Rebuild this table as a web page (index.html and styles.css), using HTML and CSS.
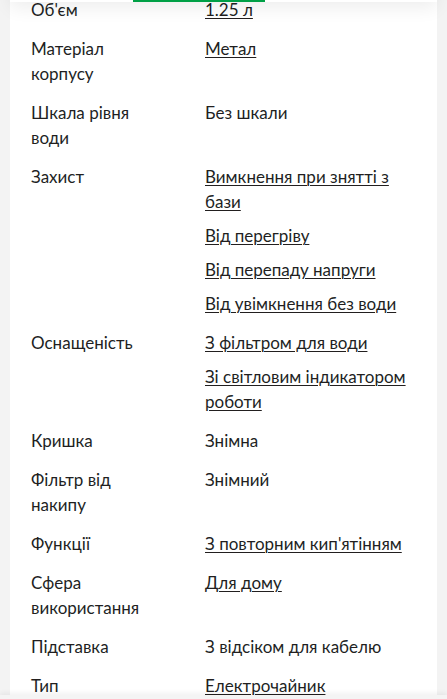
FILE: index.html
```html
<!DOCTYPE html>
<html lang="uk">
<head>
<meta charset="utf-8">
<link rel="stylesheet" href="styles.css">
</head>
<body>
<div class="tabs"><span class="tab-indicator"></span></div>
<main class="card">
  <dl class="specs">
    <div class="row"><dt>Об'єм</dt><dd><a href="#">1.25 л</a></dd></div>
    <div class="row"><dt>Матеріал корпусу</dt><dd><a href="#">Метал</a></dd></div>
    <div class="row"><dt>Шкала рівня води</dt><dd><span>Без шкали</span></dd></div>
    <div class="row"><dt>Захист</dt><dd>
      <a href="#">Вимкнення при знятті з бази</a>
      <a href="#">Від перегріву</a>
      <a href="#">Від перепаду напруги</a>
      <a href="#">Від увімкнення без води</a>
    </dd></div>
    <div class="row"><dt>Оснащеність</dt><dd>
      <a href="#">З фільтром для води</a>
      <a href="#">Зі світловим індикатором роботи</a>
    </dd></div>
    <div class="row"><dt>Кришка</dt><dd><span>Знімна</span></dd></div>
    <div class="row"><dt>Фільтр від накипу</dt><dd><span>Знімний</span></dd></div>
    <div class="row"><dt>Функції</dt><dd><a href="#">З повторним кип'ятінням</a></dd></div>
    <div class="row"><dt>Сфера використання</dt><dd><a href="#">Для дому</a></dd></div>
    <div class="row"><dt>Підставка</dt><dd><span>З відсіком для кабелю</span></dd></div>
    <div class="row"><dt>Тип</dt><dd><a href="#">Електрочайник</a></dd></div>
  </dl>
</main>
<div class="bottom-bar"></div>
</body>
</html>
```
FILE: styles.css
```css
html, body {
  margin: 0;
  padding: 0;
}
body {
  background: #f3f3f3;
  font-family: Lato, "Open Sans", "Liberation Sans", sans-serif;
  color: #221f1f;
  font-size: 17px;
  line-height: 25px;
  overflow: hidden;
  height: 699px;
}
.tabs {
  position: fixed;
  top: -40px;
  left: 10px;
  right: 10px;
  height: 42px;
  background: #fff;
  box-shadow: 0 6px 18px rgba(0, 0, 0, 0.07);
  z-index: 2;
}
.tab-indicator {
  position: absolute;
  left: 123px;
  bottom: 0;
  width: 132px;
  height: 2px;
  background: #00a046;
}
.card {
  background: #fff;
  margin: -3px 10px 0;
  padding: 0 21px 40px;
}
.specs {
  margin: 0;
  display: flex;
  flex-direction: column;
  gap: 14px;
}
.row {
  display: grid;
  grid-template-columns: 174px 1fr;
}
dt {
  margin: 0;
  padding-right: 40px;
}
dd {
  margin: 0;
  display: flex;
  flex-direction: column;
  gap: 9px;
}
dd a {
  color: #221f1f;
  text-decoration: underline;
  text-underline-offset: 2px;
  text-decoration-thickness: 1px;
}
.bottom-bar {
  position: fixed;
  left: 0;
  right: 0;
  bottom: -56px;
  height: 60px;
  background: #f4f4f4;
  box-shadow: 0 -2px 5px rgba(0, 0, 0, 0.06);
  z-index: 2;
}
```
